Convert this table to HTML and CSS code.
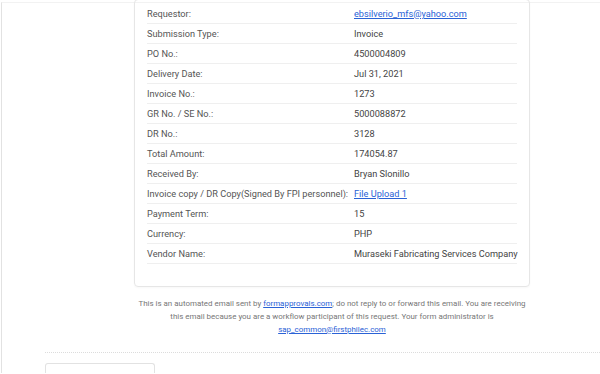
FILE: index.html
```html
<!DOCTYPE html>
<html lang="en">
<head>
  <meta charset="UTF-8" />
  <meta name="viewport" content="width=device-width, initial-scale=1.0"/>
  <title>Form Approval</title>
  <link rel="stylesheet" href="styles.css">
</head>
<body>

  <div class="page">
    <div class="content">

      <div class="card">
        <div class="row"><div class="label">Requestor:</div><div class="value"><a href="#">ebsilverio_mfs@yahoo.com</a></div></div>
        <div class="row"><div class="label">Submission Type:</div><div class="value">Invoice</div></div>
        <div class="row"><div class="label">PO No.:</div><div class="value">4500004809</div></div>
        <div class="row"><div class="label">Delivery Date:</div><div class="value">Jul 31, 2021</div></div>
        <div class="row"><div class="label">Invoice No.:</div><div class="value">1273</div></div>
        <div class="row"><div class="label">GR No. / SE No.:</div><div class="value">5000088872</div></div>
        <div class="row"><div class="label">DR No.:</div><div class="value">3128</div></div>
        <div class="row"><div class="label">Total Amount:</div><div class="value">174054.87</div></div>
        <div class="row"><div class="label">Received By:</div><div class="value">Bryan Slonillo</div></div>
        <div class="row"><div class="label">Invoice copy / DR Copy(Signed By FPI personnel):</div><div class="value"><a href="#">File Upload 1</a></div></div>
        <div class="row"><div class="label">Payment Term:</div><div class="value">15</div></div>
        <div class="row"><div class="label">Currency:</div><div class="value">PHP</div></div>
        <div class="row"><div class="label">Vendor Name:</div><div class="value">Muraseki Fabricating Services Company</div></div>
      </div>

      <div class="notice">
        <p>This is an automated email sent by <a href="#">formapprovals.com</a>; do not reply to or forward this email. You are receiving</p>
        <p>this email because you are a workflow participant of this request. Your form administrator is</p>
        <p><a href="#">sap_common@firstphilec.com</a></p>
      </div>

    </div>

    <div class="divider"></div>
    <div class="reply-box"></div>
  </div>

</body>
</html>
```

FILE: styles.css
```css
:root {
  --border: #e6e6e6;
  --text: #555;
  --link: #2a62d6;
}

* {
  margin: 0;
  padding: 0;
  box-sizing: border-box;
}

html, body {
  background: #fff;
  font-family: Roboto, 'Liberation Sans', sans-serif;
  color: var(--text);
  overflow: hidden;
}

.page {
  margin: 2px 0 0 1px;
  border-top: 1px solid #f2f2f2;
  border-left: 1px solid #e2e2e2;
  padding-left: 43px;
  height: 371px;
}

.content {
  margin-left: 89px;
  width: 396px;
}

.card {
  margin-top: -4px;
  border: 1px solid var(--border);
  border-radius: 4px;
  padding: 4px 12px 22px;
  box-shadow: 0 1px 2px rgba(0, 0, 0, 0.03);
}

.row {
  display: flex;
  align-items: center;
  height: 20px;
  border-bottom: 1px solid #efefef;
  font-size: 9.2px;
}

.label {
  width: 207px;
  flex-shrink: 0;
  white-space: nowrap;
}

.value {
  color: #444;
  white-space: nowrap;
}

a {
  color: var(--link);
  text-decoration: underline;
}

.notice {
  margin-top: 10px;
  font-size: 7.95px;
  line-height: 13px;
  text-align: center;
  color: #777;
  white-space: nowrap;
}

.divider {
  margin-top: 16px;
  border-top: 1px dotted #dcdcdc;
}

.reply-box {
  margin-top: 10px;
  width: 110px;
  height: 11px;
  border: 1px solid #e2e2e2;
  border-bottom: none;
  border-radius: 3px 3px 0 0;
}
```
